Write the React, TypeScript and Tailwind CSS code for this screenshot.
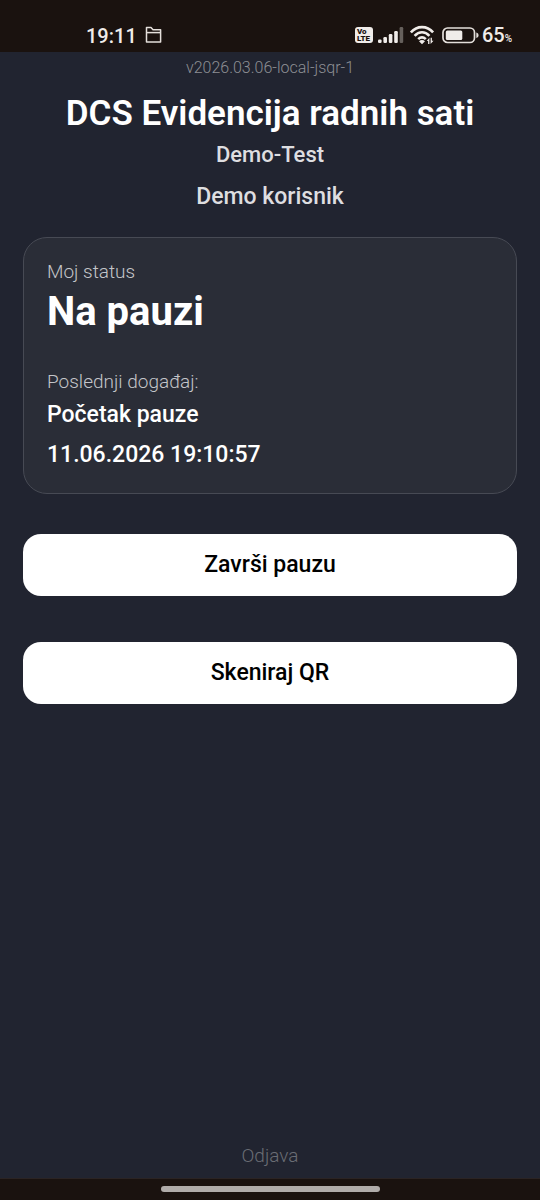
import type { ReactNode } from "react";

function FolderIcon() {
  return (
    <svg width="18" height="18" viewBox="0 0 18 18" fill="none" stroke="#e4dfdb" strokeWidth="1.5" strokeLinejoin="round" aria-hidden="true">
      <path d="M1.500 1.500h4.500l2 2.200h7.600v12.200H1.500z" />
      <path d="M1.500 6.600h14.100" />
    </svg>
  );
}

function SignalIcon() {
  return (
    <svg width="26" height="16" viewBox="0 0 26 16" fill="#f0ece9" aria-hidden="true">
      <rect x="0" y="12.4" width="3.6" height="3.6" rx="1.2" />
      <rect x="5.4" y="10" width="3.6" height="6" rx="1.2" />
      <rect x="10.8" y="7" width="3.6" height="9" rx="1.2" />
      <rect x="16.2" y="4" width="3.6" height="12" rx="1.2" />
      <rect x="21.6" y="0" width="3.6" height="16" rx="1.2" fill="#66605c" />
    </svg>
  );
}

function WifiIcon() {
  return (
    <svg width="26" height="20" viewBox="0 0 26 20" fill="none" stroke="#f0ece9" strokeWidth="2.6" aria-hidden="true">
      <path d="M.9 7.400C7 .3 17 .3 23.100 7.400" />
      <path d="M4.600 10.800c4.400-4.800 10.400-4.800 14.800 0" />
      <path d="M8.200 14.100c2.500-2.400 5.100-2.400 7.600 0" />
      <path d="M12 19.200l-3-3c1.700-1.700 4.300-1.700 6 0z" fill="#f0ece9" stroke="none" />
      <g fill="#f0ece9" stroke="none">
        <path d="M16.800 15.900l2.600-3.200v6.300h-1.300v-3.100z" />
        <path d="M20.600 12.700h1.300v3.100h1.600l-2.900 3.200z" />
      </g>
    </svg>
  );
}

function BatteryIcon() {
  return (
    <svg width="38" height="17" viewBox="0 0 38 17" fill="none" aria-hidden="true">
      <rect x="1" y="1" width="31.500" height="14.500" rx="4.5" stroke="#e4dfdb" strokeWidth="1.7" />
      <rect x="3.800" y="3.600" width="16.500" height="9.400" rx="1.5" fill="#f0ece9" />
      <path d="M34.300 5.500v5.500c1.600-.4 2.200-1.300 2.200-2.750S35.900 5.900 34.300 5.500z" fill="#e4dfdb" />
    </svg>
  );
}

function StatusBar() {
  return (
    <div className="flex h-[52px] items-center justify-between bg-[#1a120f] pt-[18px] pr-7 pl-[86px] text-[#f0ece9]">
      <div className="flex items-center gap-2">
        <span className="pt-[2px] text-[20px] leading-6 font-medium">19:11</span>
        <FolderIcon />
      </div>
      <div className="flex items-center">
        <span className="mr-[5px] flex h-4 w-[18px] flex-col justify-center rounded-[3px] bg-[#f0ece9] pl-[2px] text-[8px] leading-[7px] font-black text-[#1a120f]">
          <span>Vo</span>
          <span>LTE</span>
        </span>
        <SignalIcon />
        <span className="mr-[6px] ml-[6px]">
          <WifiIcon />
        </span>
        <BatteryIcon />
        <span className="ml-[2px] flex items-baseline pt-1 text-[20px] leading-6 font-medium">
          65<span className="text-[10px]">%</span>
        </span>
      </div>
    </div>
  );
}

function ActionButton({ children }: { children: ReactNode }) {
  return (
    <button type="button" className="h-[62px] w-full rounded-[18px] bg-white text-[23px] leading-7 font-medium text-black">
      {children}
    </button>
  );
}

export default function App() {
  return (
    <div className="flex min-h-screen flex-col bg-[#212430] font-['Roboto',sans-serif] text-white">
      <StatusBar />
      <main className="flex flex-1 flex-col px-[23px] pt-1 pb-[10px]">
        <header className="flex flex-col items-center text-center">
          <p className="text-[16px] leading-6 font-light text-[#8d8f94]">v2026.03.06-local-jsqr-1</p>
          <h1 className="mt-[14px] text-[35px] leading-10 font-semibold">DCS Evidencija radnih sati</h1>
          <p className="mt-[7px] text-[22px] leading-7 font-medium text-[#dedee0]">Demo-Test</p>
          <p className="mt-[14px] text-[23px] leading-7 font-medium text-[#dedee0]">Demo korisnik</p>
        </header>

        <section className="mt-[26px] rounded-[24px] border border-[#474a54] bg-[#2a2d37] px-[23px] pt-[22px] pb-6">
          <p className="text-[19px] leading-6 font-light text-[#c4c5c9]">Moj status</p>
          <h2 className="mt-1 text-[40px] leading-[48px] font-bold">Na pauzi</h2>
          <p className="mt-[34px] text-[19px] leading-6 font-light text-[#c4c5c9]">Poslednji događaj:</p>
          <p className="mt-[7px] text-[23px] leading-7 font-medium">Početak pauze</p>
          <p className="mt-3 text-[23px] leading-7 font-medium">11.06.2026 19:10:57</p>
        </section>

        <div className="mt-10 flex flex-col gap-[46px]">
          <ActionButton>Završi pauzu</ActionButton>
          <ActionButton>Skeniraj QR</ActionButton>
        </div>

        <button type="button" className="mt-auto self-center text-[19px] leading-6 font-light text-[#6a6d74]">
          Odjava
        </button>
      </main>
      <div className="flex h-[22px] items-start justify-center border-t border-[#2b2424] bg-[#1a120f] pt-[7px]">
        <div className="h-[6px] w-[219px] rounded-full bg-[#b0acaa]" />
      </div>
    </div>
  );
}
